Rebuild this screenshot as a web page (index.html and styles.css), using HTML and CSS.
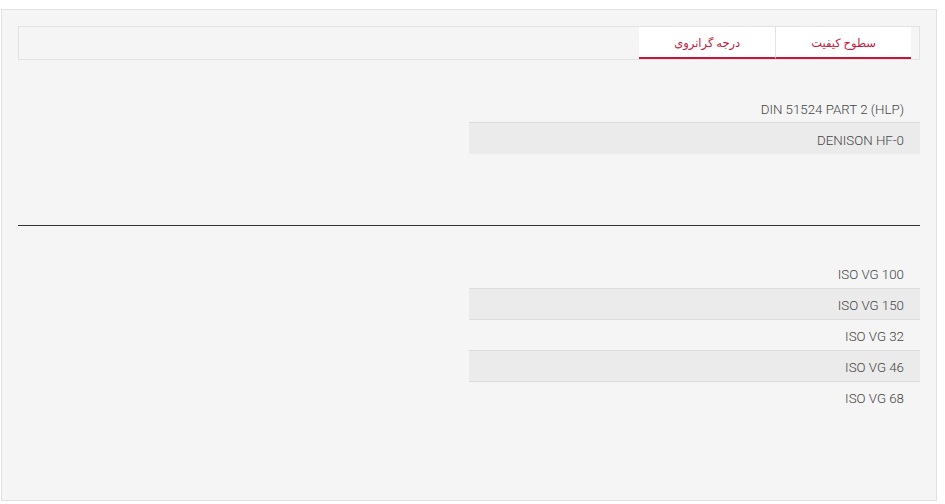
FILE: index.html
```html
<!DOCTYPE html>
<html lang="fa" dir="rtl">
<head>
  <meta charset="UTF-8" />
  <meta name="viewport" content="width=device-width, initial-scale=1.0"/>
  <title>مشخصات محصول</title>
  <link rel="stylesheet" href="styles.css">
</head>
<body>
  <div class="panel">
    <ul class="tabs">
      <li class="tab active">سطوح کیفیت</li>
      <li class="tab active">درجه گرانروی</li>
    </ul>

    <table class="spec-table">
      <tbody>
        <tr><td>DIN 51524 PART 2 (HLP)</td></tr>
        <tr><td>DENISON HF-0</td></tr>
      </tbody>
    </table>

    <hr class="divider">

    <table class="spec-table">
      <tbody>
        <tr><td>ISO VG 100</td></tr>
        <tr><td>ISO VG 150</td></tr>
        <tr><td>ISO VG 32</td></tr>
        <tr><td>ISO VG 46</td></tr>
        <tr><td>ISO VG 68</td></tr>
      </tbody>
    </table>
  </div>
</body>
</html>
```

FILE: styles.css
```css
* {
  box-sizing: border-box;
}
body {
  margin: 0;
  background: #fff;
  font-family: Roboto, "DejaVu Sans", sans-serif;
  color: #444;
}
.panel {
  width: 936px;
  height: 492px;
  margin: 9px 0 0 0;
  margin-right: 8px;
  padding: 16px;
  background: #f5f5f5;
  border: 1px solid #e2e2e2;
}
.tabs {
  display: flex;
  list-style: none;
  margin: 0;
  padding: 0 8px 0 0;
  height: 34px;
  border: 1px solid #e3e3e3;
}
.tab {
  padding: 2px 35px 0;
  line-height: 28px;
  font-size: 11.5px;
  color: #c4173a;
  background: #fff;
  border-bottom: 2px solid #c4173a;
  border-left: 1px solid #e3e3e3;
}
.tab:last-child {
  border-left: none;
}
.spec-table {
  width: 50%;
  margin-top: 31px;
  border-collapse: collapse;
  font-size: 13.3px;
  font-weight: 300;
}
.spec-table td {
  height: 31px;
  padding: 4px 16px 0;
  text-align: right;
  border-top: 1px solid #dcdcdc;
}
.spec-table tr:first-child td {
  border-top-color: transparent;
}
.spec-table tr:nth-child(even) td {
  background: #ebebeb;
}
.divider {
  margin: 71px 0 0;
  border: 0;
  border-top: 1px solid #333;
}
```
